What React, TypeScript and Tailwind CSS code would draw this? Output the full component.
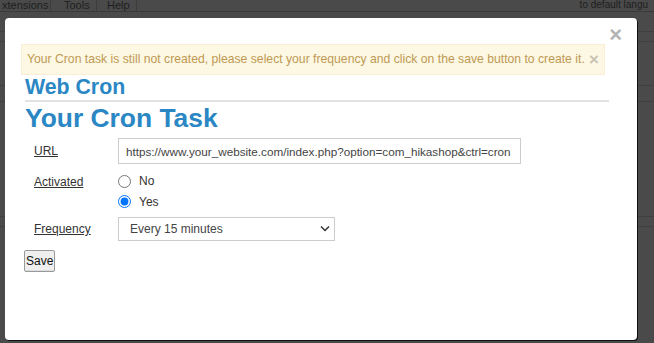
import { useState } from "react";

const urlValue = "https://www.your_website.com/index.php?option=com_hikashop&ctrl=cron";

const frequencies = ["Every 5 minutes", "Every 15 minutes", "Every 30 minutes", "Every hour", "Every day"];

const App = () => {
  const [activated, setActivated] = useState("yes");
  const [frequency, setFrequency] = useState("Every 15 minutes");

  return (
    <div className="relative h-[343px] w-[654px] overflow-hidden bg-[#4a4a4a] font-['Liberation_Sans',Arial,sans-serif]">
      {/* page behind the overlay */}
      <div className="flex h-[12px] border-b border-[#3a3a3a] text-[11px] leading-[11px] text-[#1e1e1e]">
        <span className="w-[51px] border-r border-[#3d3d3d] pl-[2px]">xtensions</span>
        <span className="w-[46px] border-r border-[#3d3d3d] pl-[13px]">Tools</span>
        <span className="w-[40px] border-r border-[#3d3d3d] pl-[10px]">Help</span>
        <span className="ml-auto mr-[6px] text-[10px] leading-[10px]">to default langu</span>
      </div>
      <div className="flex flex-col">
        {[20, 10, 44, 16, 115, 10].map((h, i) => (
          <div key={i} className="border-b border-[#3f3f3f]" style={{ height: h }} />
        ))}
      </div>

      {/* modal */}
      <div className="absolute left-[5px] top-[18px] h-[322px] w-[632px] rounded-[4px] bg-white shadow-[1px_1px_0_#111] pl-[16px] pt-[26px]">
        <button className="absolute right-[15px] top-[6px] text-[22px] font-bold leading-[22px] text-[#b3b3b3]">×</button>

        <div className="flex h-[31px] w-[584px] items-center border border-[#fbeed5] bg-[#fcf8e3] pl-[5px] pr-[5px] text-[12.2px] text-[#c09853]">
          <span>Your Cron task is still not created, please select your frequency and click on the save button to create it.</span>
          <span className="ml-auto text-[17px] font-bold leading-none text-[#c9c2b2]">×</span>
        </div>

        <div className="ml-[4px] w-[584px] border-b-2 border-[#e2e2e2] pb-[1px]">
          <h2 className="text-[21.3px] font-bold leading-[24px] text-[#2a87c4]">Web Cron</h2>
        </div>
        <h1 className="ml-[4px] text-[26.4px] font-bold leading-[32px] text-[#2a87c4]">Your Cron Task</h1>

        <div className="mt-[4px] flex flex-col pl-[13px] text-[12px] text-[#333]">
          <div className="flex h-[26px] items-center">
            <span className="w-[84px] underline">URL</span>
            <input
              readOnly
              value={urlValue}
              className="h-[26px] w-[403px] border border-[#cccccc] px-[7px] text-[11.7px] text-[#444] outline-none"
            />
          </div>

          <div className="mt-[7px] flex">
            <span className="w-[84px] pt-[2px] underline">Activated</span>
            <div className="flex flex-col">
              <label className="flex h-[20px] items-center gap-[8px]">
                <input
                  type="radio"
                  name="activated"
                  checked={activated === "no"}
                  onChange={() => setActivated("no")}
                  className="m-0 h-[13px] w-[13px] accent-[#0075ff]"
                />
                <span>No</span>
              </label>
              <label className="flex h-[21px] items-center gap-[8px]">
                <input
                  type="radio"
                  name="activated"
                  checked={activated === "yes"}
                  onChange={() => setActivated("yes")}
                  className="m-0 h-[13px] w-[13px] accent-[#0075ff]"
                />
                <span>Yes</span>
              </label>
            </div>
          </div>

          <div className="mt-[5px] flex h-[24px] items-center">
            <span className="w-[84px] underline">Frequency</span>
            <div className="relative">
              <select
                value={frequency}
                onChange={(e) => setFrequency(e.target.value)}
                className="h-[24px] w-[217px] appearance-none border border-[#cccccc] bg-white pl-[11px] text-[12px] text-[#444] outline-none"
              >
                {frequencies.map((f) => (
                  <option key={f}>{f}</option>
                ))}
              </select>
              <svg className="pointer-events-none absolute right-[5px] top-[8px]" width="10" height="7" viewBox="0 0 10 7">
                <path d="M1 1.5 L5 5.5 L9 1.5" fill="none" stroke="#333" strokeWidth="1.5" />
              </svg>
            </div>
          </div>
        </div>

        <button className="ml-[3px] mt-[9px] h-[22px] rounded-[2px] border border-[#9a9a9a] bg-[#efefef] px-[1px] text-[12px] leading-none text-[#111] shadow-[inset_0_-1px_0_#ddd]">
          Save
        </button>
      </div>
    </div>
  );
};

export default App;
